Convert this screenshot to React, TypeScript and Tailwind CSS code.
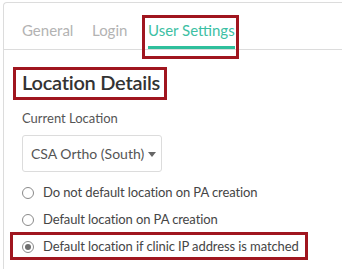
const RED = "border-[#a0161f]";

function Radio({ checked, label }: { checked?: boolean; label: string }) {
  return (
    <label className="flex items-center h-[27px]">
      <span className="w-[12px] h-[12px] rounded-full border border-[#8a8a8a] bg-white flex items-center justify-center">
        {checked && <span className="w-[6px] h-[6px] rounded-full bg-[#6e6e6e]" />}
      </span>
      <span className="ml-[9px] text-[13px] tracking-[-0.1px] text-[#454545]">{label}</span>
    </label>
  );
}

export default function App() {
  return (
    <div
      className="w-[342px] h-[269px] bg-white pt-[2px] pl-[3px] overflow-hidden"
      style={{ fontFamily: 'Lato, "Open Sans", sans-serif' }}
    >
      <div className="h-full border-l border-t border-[#dcdcdc] rounded-tl-[4px]">
        {/* tabs */}
        <div className="flex h-[47px] border-b border-[#dcdcdc] pl-[18px] text-[15px] leading-[20px]">
          <div className="w-[70px] pt-[17px] text-[#b3b3b3]">General</div>
          <div className="w-[56px] pt-[17px] text-[#b3b3b3]">Login</div>
          <div className="relative">
            <div className="pt-[17px] pb-[6px] border-b-[3px] border-[#2fbf9c] text-[#3cc0a3] whitespace-nowrap">
              User Settings
            </div>
            <span className={`absolute -left-[6px] w-[97px] top-[12px] -bottom-[10px] border-[3px] ${RED}`} />
          </div>
        </div>

        <div className="pl-[18px]">
          <div className="relative inline-block mt-[19px]">
            <h2 className="text-[20px] leading-[26px] font-semibold tracking-[-0.25px] text-[#333] whitespace-nowrap">
              Location Details
            </h2>
            <span className={`absolute -left-[9px] w-[154px] -top-[2px] -bottom-[5px] border-[3px] ${RED}`} />
          </div>

          <div className="mt-[13px] text-[13px] leading-[18px] text-[#555]">Current Location</div>

          <div className="mt-[8px] w-[140px] h-[37px] border border-[#dcdcdc] rounded-[3px] flex items-center pl-[8px]">
            <span className="text-[14px] text-[#555] whitespace-nowrap">CSA Ortho (South)</span>
            <span className="ml-[4px] mt-[1px] w-0 h-0 border-l-[4px] border-r-[4px] border-t-[5px] border-l-transparent border-r-transparent border-t-[#666]" />
          </div>

          <div className="mt-[7px] flex flex-col">
            <Radio label="Do not default location on PA creation" />
            <Radio label="Default location on PA creation" />
            <div className="relative">
              <Radio checked label="Default location if clinic IP address is matched" />
              <span className={`absolute -left-[12px] w-[298px] -top-[1px] h-[28px] border-[3px] ${RED}`} />
            </div>
          </div>
        </div>
      </div>
    </div>
  );
}
